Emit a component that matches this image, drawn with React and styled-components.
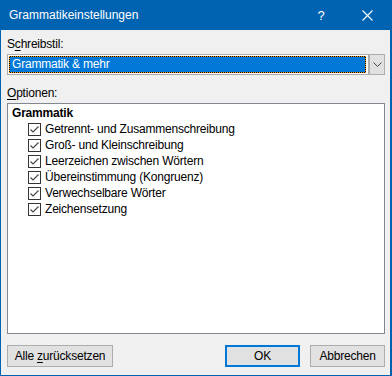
import React from 'react'
import styled, { createGlobalStyle } from 'styled-components'

const GlobalStyle = createGlobalStyle`
  html, body {
    margin: 0;
    padding: 0;
    background: #f0f0f0;
  }
  * { box-sizing: border-box; }
`

const options = [
  'Getrennt- und Zusammenschreibung',
  'Groß- und Kleinschreibung',
  'Leerzeichen zwischen Wörtern',
  'Übereinstimmung (Kongruenz)',
  'Verwechselbare Wörter',
  'Zeichensetzung',
]

const CheckIcon = () => (
  <svg width="13" height="13" viewBox="0 0 13 13">
    <rect x="0.5" y="0.5" width="12" height="12" fill="#fff" stroke="#333" />
    <path d="M2.5 6.5 L5 9 L10.5 3.5" fill="none" stroke="#444" strokeWidth="1.1" />
  </svg>
)

function App() {
  return (
    <>
      <GlobalStyle />
      <Window>
        <TitleBar>
          <Title>Grammatikeinstellungen</Title>
          <TitleButton>?</TitleButton>
          <CloseButton>
            <svg width="11" height="11" viewBox="0 0 11 11">
              <path d="M0.5 0.5 L10.5 10.5 M10.5 0.5 L0.5 10.5" stroke="#fff" strokeWidth="1.1" />
            </svg>
          </CloseButton>
        </TitleBar>
        <Body>
          <Label>S<u>c</u>hreibstil:</Label>
          <Combo>
            <ComboField>
              <Selected>Grammatik &amp; mehr</Selected>
            </ComboField>
            <DropButton>
              <svg width="9" height="5" viewBox="0 0 9 5">
                <path d="M0.5 0.5 L4.5 4.5 L8.5 0.5" fill="none" stroke="#444" strokeWidth="1" />
              </svg>
            </DropButton>
          </Combo>
          <Label spaced><u>O</u>ptionen:</Label>
          <ListBox>
            <Group>Grammatik</Group>
            {options.map(o => (
              <Item key={o}>
                <CheckIcon />
                <span>{o}</span>
              </Item>
            ))}
          </ListBox>
          <Footer>
            <Button wide><span>Alle <u>z</u>urücksetzen</span></Button>
            <Spacer />
            <Button primary>OK</Button>
            <Button>Abbrechen</Button>
          </Footer>
        </Body>
      </Window>
    </>
  )
}

const Window = styled.div`
  width: 392px;
  height: 376px;
  display: flex;
  flex-direction: column;
  background: #f0f0f0;
  border-style: solid;
  border-color: #0063b1;
  border-width: 0 2px 1px 1px;
  font-family: "Liberation Sans", "Noto Sans", sans-serif;
  font-size: 12px;
  color: #000;
`
const TitleBar = styled.div`
  height: 30px;
  flex: none;
  display: flex;
  align-items: center;
  background: #0063b1;
  color: #fff;
  padding-left: 8px;
`
const Title = styled.div`
  flex: 1;
  font-size: 12px;
`
const TitleButton = styled.div`
  width: 46px;
  text-align: center;
  font-size: 13px;
`
const CloseButton = styled.div`
  width: 46px;
  display: flex;
  justify-content: center;
`
const Body = styled.div`
  flex: 1;
  display: flex;
  flex-direction: column;
  padding: 6px 5px 8px 6px;
  letter-spacing: -0.2px;
`
const Label = styled.div`
  height: 16px;
  line-height: 16px;
  margin-top: ${props => props.spaced ? '10px' : '0'};
  margin-bottom: 2px;
  u { text-decoration-thickness: 1px; text-underline-offset: 2px; }
`
const Combo = styled.div`
  height: 21px;
  display: flex;
  border: 1px solid #adadad;
  background: #fff;
`
const ComboField = styled.div`
  flex: 1;
  padding: 1px 2px 1px 1px;
  display: flex;
`
const Selected = styled.div`
  flex: 1;
  color: #fff;
  line-height: 15px;
  padding-left: 2px;
  border: 1px dotted #f79a00;
  background: linear-gradient(#0078d7, #0078d7) padding-box, #000 border-box;
`
const DropButton = styled.div`
  width: 17px;
  display: flex;
  align-items: center;
  justify-content: center;
  background: #e1e1e1;
  margin: -1px -1px -1px 0;
  border: 1px solid #adadad;
  border-left-width: 2px;
`
const ListBox = styled.div`
  height: 231px;
  flex: none;
  border: 1px solid #828790;
  background: #fff;
  padding: 1px 4px;
`
const Group = styled.div`
  height: 16px;
  line-height: 16px;
  font-weight: bold;
`
const Item = styled.div`
  height: 16px;
  display: flex;
  align-items: center;
  gap: 4px;
  padding-left: 16px;
`
const Footer = styled.div`
  margin-top: 11px;
  display: flex;
  gap: 10px;
`
const Spacer = styled.div`
  flex: 1;
`
const Button = styled.div`
  height: 22px;
  width: ${props => props.wide ? '106px' : '75px'};
  display: flex;
  align-items: center;
  justify-content: center;
  background: #e1e1e1;
  border: ${props => props.primary ? '2px solid #0078d7' : '1px solid #adadad'};
  u { text-decoration-thickness: 1px; text-underline-offset: 2px; }
`

export default App
